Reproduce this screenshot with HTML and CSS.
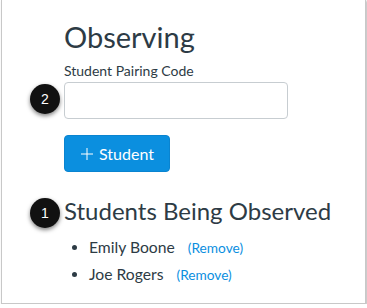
FILE: index.html
```html
<!DOCTYPE html>
<html>
<head>
  <meta charset="UTF-8">
  <title>Observing</title>
  <link rel="stylesheet" href="styles.css">
</head>
<body>
  <div class="frame">
    <div class="content">
      <h1>Observing</h1>

      <div class="field">
        <label for="pairing-code">Student Pairing Code</label>
        <input type="text" id="pairing-code">
        <span class="badge badge-code">2</span>
      </div>

      <button type="button" class="add-btn">
        <svg width="12" height="12" viewBox="0 0 12 12"><path d="M6 0v12M0 6h12" stroke="#fff" stroke-width="1" fill="none"/></svg>
        Student
      </button>

      <div class="observed">
        <h2>Students Being Observed</h2>
        <span class="badge badge-list">1</span>
        <ul>
          <li>Emily Boone <a href="#">(Remove)</a></li>
          <li>Joe Rogers <a href="#">(Remove)</a></li>
        </ul>
      </div>
    </div>
  </div>
</body>
</html>
```

FILE: styles.css
```css
/* page frame */
body {
  margin: 0;
  background-color: #fff;
  font-family: Lato, "Open Sans", sans-serif;
  color: #2d3b45;
}

.frame {
  margin-left: 1px;
  width: 363px;
  height: 303px;
  border: 1px solid #c8c8c8;
  border-top: none;
  box-shadow: 1px 1px 2px rgba(0, 0, 0, 0.3);
}

.content {
  padding: 17px 0 0 62px;
}

h1 {
  margin: 0;
  font-size: 29px;
  font-weight: 400;
  line-height: 40px;
}

/* pairing code */
.field {
  position: relative;
  margin-top: 4px;
}

label {
  display: block;
  font-size: 14px;
  line-height: 20px;
}

input {
  display: block;
  box-sizing: border-box;
  margin-top: 1px;
  width: 224px;
  height: 37px;
  border: 1px solid #c7cdd1;
  border-radius: 4px;
  font-size: 16px;
}

.add-btn {
  display: flex;
  align-items: center;
  gap: 6px;
  margin-top: 16px;
  height: 37px;
  padding: 0 15px 0 16px;
  border: 1px solid #0a84d0;
  border-radius: 4px;
  background-color: #0b8fdf;
  color: #fff;
  font-family: Lato, sans-serif;
  font-size: 16px;
}

/* observed list */
.observed {
  position: relative;
  margin-top: 24px;
}

h2 {
  margin: 0;
  font-size: 24px;
  font-weight: 400;
  line-height: 29px;
}

ul {
  margin: 9px 0 0;
  padding-left: 25px;
  font-size: 15.7px;
  line-height: 27px;
}

li a {
  margin-left: 9px;
  color: #0b8fdf;
  font-size: 13.7px;
  text-decoration: none;
}

/* callout badges */
.badge {
  position: absolute;
  left: -34px;
  width: 30px;
  height: 30px;
  border-radius: 50%;
  background-color: #111;
  color: #fff;
  font-family: "Liberation Sans", Arial, sans-serif;
  font-size: 14px;
  line-height: 30px;
  text-align: center;
  box-shadow: 0 2px 4px rgba(0, 0, 0, 0.5);
}

.badge-code {
  top: 23px;
}

.badge-list {
  top: 2px;
}
```
